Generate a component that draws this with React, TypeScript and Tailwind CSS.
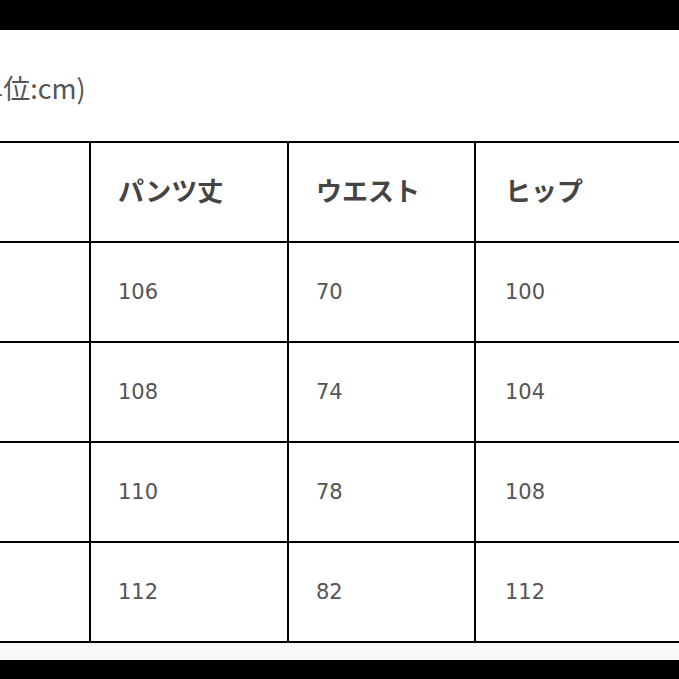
const headers = ["パンツ丈", "ウエスト", "ヒップ"]

const rows = [
  ["106", "70", "100"],
  ["108", "74", "104"],
  ["110", "78", "108"],
  ["112", "82", "112"],
]

const jp = { fontFamily: '"Noto Sans CJK JP", "Noto Sans", sans-serif' }
const num = { fontFamily: '"DejaVu Sans", "Noto Sans CJK JP", sans-serif' }

function Row({ cells, header }: { cells: string[]; header?: boolean }) {
  return (
    <div className="flex h-[100px] border-b-2 border-black">
      <div className="w-[91px] shrink-0 border-r-2 border-black" />
      {cells.map((c, i) => (
        <div
          key={i}
          className={
            i === 0
              ? "flex w-[198px] shrink-0 items-center border-r-2 border-black pl-[27px]"
              : i === 1
                ? "flex w-[187px] shrink-0 items-center border-r-2 border-black pl-[27px]"
                : "flex flex-1 items-center pl-[29px]"
          }
        >
          {header ? (
            <span className="pb-[5px] text-[26px] font-bold leading-none text-[#444]" style={jp}>
              {c}
            </span>
          ) : (
            <span className="text-[21px] leading-none text-[#555]" style={num}>
              {c}
            </span>
          )}
        </div>
      ))}
    </div>
  )
}

export default function App() {
  return (
    <div className="flex h-[679px] w-[679px] flex-col overflow-hidden bg-white">
      <div className="h-[30px] shrink-0 bg-black" />
      <div className="h-[111px] shrink-0 overflow-hidden pt-[44px]">
        <p className="-ml-[33px] whitespace-nowrap text-[27px] leading-none text-[#555]" style={jp}>
          (単位:cm)
        </p>
      </div>
      <div className="shrink-0 border-t-2 border-black">
        <Row cells={headers} header />
        {rows.map((r, i) => (
          <Row key={i} cells={r} />
        ))}
      </div>
      <div className="h-[17px] shrink-0 bg-[#f8f8f8]" />
      <div className="flex-1 bg-black" />
    </div>
  )
}
